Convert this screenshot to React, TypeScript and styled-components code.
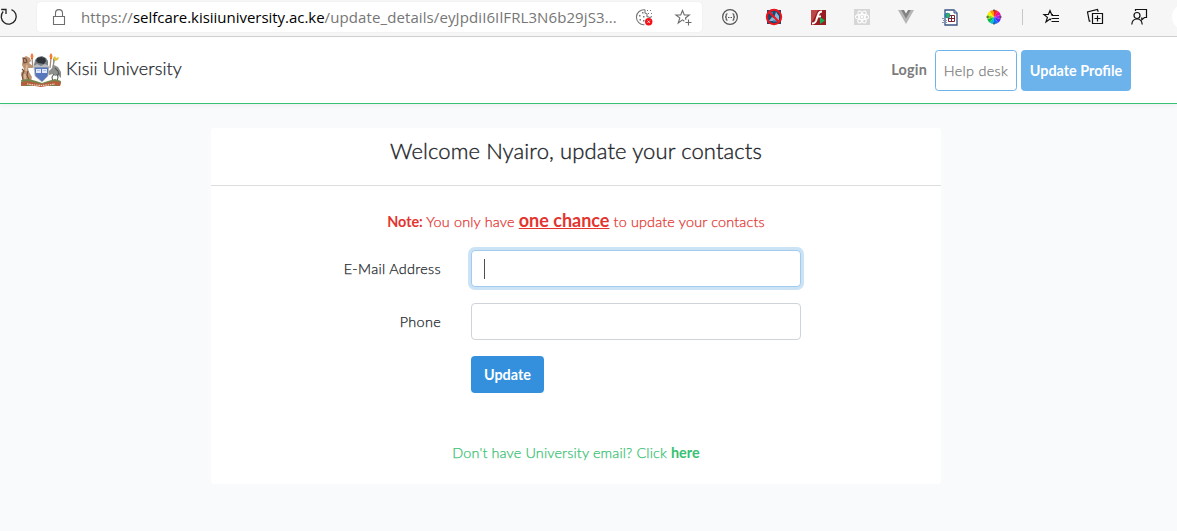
import * as React from 'react';
import styled, { createGlobalStyle } from 'styled-components';

const GlobalStyle = createGlobalStyle`
  * {
    box-sizing: border-box;
  }
  body {
    margin: 0;
    background: #f8fafc;
    color: #212529;
    font-family: Lato, "Open Sans", sans-serif;
    font-size: 14.4px;
    font-weight: 300;
    line-height: 23px;
    -webkit-text-stroke-width: 0.25px;
    overflow: hidden;
  }
  b {
    font-weight: 700;
    -webkit-text-stroke-width: 0;
  }
`;

const BrowserBar = styled.div`
  display: flex;
  align-items: flex-start;
  height: 37px;
  background: #f6f6f6;
  border-bottom: 1px solid #cfcfcf;
  overflow: hidden;
`;

const Icon = styled.svg`
  display: block;
  flex: none;
  overflow: visible;
`;

const ReloadSlot = styled.div`
  width: 37px;
  padding-top: 8px;
  flex: none;
`;

const AddressBox = styled.div`
  display: flex;
  align-items: center;
  flex: none;
  width: 665px;
  height: 30px;
  margin: 2px 6px 0 0;
  padding: 0 10px 0 14px;
  background: #fff;
  border-radius: 4px;
  box-shadow: 0 0 2px rgba(0, 0, 0, 0.07);
`;

const Url = styled.div`
  flex: 1;
  margin-left: 14px;
  font-family: "Open Sans", "Noto Sans", sans-serif;
  font-size: 15px;
  font-weight: 400;
  -webkit-text-stroke-width: 0;
  letter-spacing: 0.1px;
  color: #767676;
  white-space: nowrap;
`;

const Host = styled.span`
  color: #000;
  letter-spacing: -0.03px;
`;

const StarSlot = styled.div`
  margin-left: 22px;
`;

const ToolSlot = styled.div`
  display: flex;
  align-items: center;
  justify-content: center;
  flex: none;
  width: 44px;
  height: 34px;
`;

const ToolDivider = styled.div`
  flex: none;
  width: 1px;
  height: 16px;
  margin: 9px 6px 0;
  background: #c8c8c8;
`;

const Avatar = styled.div`
  flex: none;
  width: 26px;
  height: 26px;
  margin: 4px 0 0 11px;
  border-radius: 50%;
  background: #fff;
`;

const Navbar = styled.nav`
  display: flex;
  align-items: center;
  justify-content: space-between;
  height: 67px;
  padding: 0 46px 0 20px;
  background: #fff;
  border-bottom: 1px solid #38c172;
  box-shadow: 0 2px 4px rgba(0, 0, 0, 0.04);
`;

const Brand = styled.div`
  display: flex;
  align-items: center;
  gap: 4px;
  font-size: 18px;
  letter-spacing: 0.12px;
`;

const BrandName = styled.span`
  padding-bottom: 3px;
`;

const NavLinks = styled.div`
  display: flex;
  align-items: center;
  gap: 4px;
  padding-top: 1px;
`;

const NavLink = styled.a`
  margin: -3px 4px 0 0;
  color: #7b7b7b;
  font-weight: 700;
  letter-spacing: 0.2px;
  -webkit-text-stroke-width: 0;
`;

const NavButton = styled.a<{ $filled?: boolean; $width: number }>`
  display: flex;
  align-items: center;
  justify-content: center;
  width: ${({ $width }) => $width}px;
  height: 41px;
  padding-bottom: 1px;
  border: 1px solid #6cb2eb;
  border-radius: 3.5px;
  background: ${({ $filled }) => ($filled ? '#6cb2eb' : '#fff')};
  color: ${({ $filled }) => ($filled ? '#fff' : '#7b7b7b')};
  font-weight: ${({ $filled }) => ($filled ? 700 : 300)};
  letter-spacing: ${({ $filled }) => ($filled ? 0 : 0.3)}px;
  -webkit-text-stroke-width: ${({ $filled }) => ($filled ? 0 : 0.25)}px;
  white-space: nowrap;
`;

const Card = styled.main`
  width: 730px;
  height: 356px;
  margin: 24px 0 0 211px;
  background: #fff;
  border-radius: 3px;
`;

const CardHeader = styled.header`
  height: 58px;
  padding-top: 9px;
  border-bottom: 1px solid #dcdddf;
  text-align: center;
`;

const Title = styled.h1`
  margin: 0;
  font-size: 22px;
  line-height: 28px;
  font-weight: 300;
  letter-spacing: 0.12px;
  -webkit-text-stroke-width: 0.35px;
`;

const Note = styled.p`
  margin: 0;
  padding: 21px 0 15px;
  color: #e3342f;
  text-align: center;
  line-height: 27px;
  letter-spacing: 0.17px;

  b {
    letter-spacing: 0;
  }
`;

const Chance = styled.b`
  font-size: 18px;
  text-decoration: underline;
`;

const FormRow = styled.div`
  display: grid;
  grid-template-columns: 230px 330px;
  column-gap: 30px;
  align-items: center;
  height: 37px;
  margin-bottom: 16px;
`;

const Label = styled.label`
  text-align: right;
  padding-bottom: 1px;
  letter-spacing: 0.32px;
`;

const Field = styled.div`
  position: relative;
  height: 37px;
`;

const Input = styled.input<{ $active?: boolean }>`
  display: block;
  width: 100%;
  height: 37px;
  padding: 6px 12px;
  border: 1px solid ${({ $active }) => ($active ? '#a1cbef' : '#ced4da')};
  border-radius: 4px;
  box-shadow: ${({ $active }) => ($active ? '0 0 0 3px #cce3f6' : 'none')};
  background: #fff;
  font: inherit;
  outline: none;
`;

const Caret = styled.span`
  position: absolute;
  top: 9px;
  left: 13px;
  width: 1px;
  height: 20px;
  background: #495057;
`;

const SubmitButton = styled.button`
  grid-column: 2;
  width: 73px;
  height: 37px;
  padding: 0 0 1px;
  border: 0;
  border-radius: 4px;
  background: #3490dc;
  color: #fff;
  font: inherit;
  font-weight: 700;
  -webkit-text-stroke-width: 0;
`;

const Hint = styled.p`
  margin: 0;
  padding-top: 32px;
  color: #38c172;
  text-align: center;
  letter-spacing: 0.14px;

  b {
    letter-spacing: 0;
  }
`;

const CoatOfArms = () => (
  <Icon width="42" height="36" viewBox="0 0 42 36">
    {/* lion */}
    <path d="M3 6l3-2 4 2 1 3-2 2 4 3-1 2-4 0 1 4 3 5-1 4H3l-1-4-1-4 3-4-2-4z" fill="#bd9372" />
    <path d="M3 6l3 1 1 3-3 1zM2 17l2 2-2 4 1 5M8 19l-1 4 2 5" fill="none" stroke="#6d4c3a" strokeWidth="1.1" />
    <path d="M7 13l-1 6M5 22v5" fill="none" stroke="#dfbd9b" strokeWidth="1.6" />
    {/* crane */}
    <path d="M33 6l2 2-1 5 4 2 3 5v6l-3-3-3 1-2-2-4 1-1-3 4-4 1-5z" fill="#8d908c" />
    <path d="M34 22l-2 3 1 5M37 22l1 3-1 5M35 16l3 3 1 4" fill="none" stroke="#585b58" strokeWidth="1.1" />
    <path d="M33 6l2-2 1 2 3-1-1 3-3 1z" fill="#dfc43c" />
    {/* torches */}
    <path d="M12 6l1 10M31 6l-1 10" stroke="#a58a74" strokeWidth="1.3" />
    <path d="M12 1l1.5 3-.8 3h-1.4l-.8-3zM31 1l1.5 3-.8 3h-1.4l-.8-3z" fill="#ed5422" />
    <path d="M12 3v3M31 3v3" stroke="#ffac36" />
    {/* helmet */}
    <path d="M14 13l1-5 3-3 4-1 4 2 2 3v6l-3 2H16z" fill="#7a8083" />
    <path d="M17 6l4-1 4 1 1 3-2 3-6-1-2-2z" fill="#30353a" />
    <path d="M14 14l3-2 4 2 4-2 4 2v2H14z" fill="#b9bdc2" />
    {/* shield */}
    <path d="M14 15h15l-1 9-6 6-7-6z" fill="#5877bd" stroke="#c4c2b6" strokeWidth=".8" />
    <path d="M16 17h5v4h-5zM22 17h5v4h-5z" fill="#e2e9fa" />
    <path d="M17 18.5h3M23 18.5h3" stroke="#899bcc" strokeWidth=".5" />
    {/* ground and ribbon */}
    <path d="M1 28l8-1 7 2 6 2 6-2 7-2 6 2-1 5H2z" fill="#71864b" />
    <path d="M1 30l7-1 13 3 13-3 7 1-1 4-7-1-12 2-12-2-8 1z" fill="#b45e3e" />
    <path d="M7 32l7 1 7 .5 7-.5 7-1" fill="none" stroke="#efd7c2" strokeWidth="1.2" strokeDasharray="1.5 .8" />
  </Icon>
);

const ReloadIcon = () => (
  <Icon width="18" height="18" viewBox="0 0 18 18" fill="none" stroke="#222" strokeWidth="1.3">
    <path d="M11.5 1.6A7.5 7.5 0 1 1 3.2 3.5M1.2 1.5H6v4.6" />
  </Icon>
);

const LockIcon = () => (
  <Icon width="16" height="17" viewBox="0 0 16 17" fill="none" stroke="#6e6e6e" strokeWidth="1.1">
    <path d="M2.5 7.5h11v8h-11zM4.5 7.5V4.1a3.5 3.5 0 0 1 7 0v3.4" />
  </Icon>
);

const CookieIcon = () => (
  <Icon width="17" height="17" viewBox="0 0 17 17" fill="none" stroke="#777" strokeWidth="1.1">
    <path d="M9 .8a7.5 7.5 0 1 0-.5 14.9M9 .8V4l2 1v2.5l3 1 2-1" />
    <g fill="#777" stroke="none">
      <path d="M6 3h1.5v1.5H6zM3 6h1.5v1.5H3zM7 7h1.5v1.5H7zM3.5 10H5v1.5H3.5zM7 11h1.5v1.5H7zM11 1h1v1h-1zM14 1h1v1h-1zM12 4h1v1h-1zM15 4h1v1h-1z" />
    </g>
    <circle cx="12.7" cy="12.7" r="3.7" fill="#f50f16" stroke="none" />
    <path d="M11.5 11.5l2.4 2.4m0-2.4l-2.4 2.4" stroke="#fff" strokeWidth=".8" />
  </Icon>
);

const StarAddIcon = () => (
  <Icon width="17" height="17" viewBox="0 0 17 17" fill="none" stroke="#6b6b6b" strokeWidth="1.1">
    <path d="M9.4 12.2L7.5 10.9 3.2 14l1.6-5.1L.9 6h4.8l1.8-4.5L9.3 6h5L10.5 9l.5 1.8M13.5 10.5v6M10.5 13.5h6" />
  </Icon>
);

const BracesIcon = () => (
  <Icon width="18" height="18" viewBox="0 0 18 18" fill="none" stroke="#555" strokeWidth="1.2">
    <circle cx="9" cy="9" r="7.4" />
    <path d="M6.5 5.8q-1.5 0-1.3 1.7Q5.3 9 4 9q1.3 0 1.2 1.5-.2 1.7 1.3 1.7M11.5 5.8q1.5 0 1.3 1.7Q12.7 9 14 9q-1.3 0-1.2 1.5.2 1.7-1.3 1.7" />
    <path d="M7 9.5h4" strokeDasharray="1 .5" />
  </Icon>
);

const BlockedIcon = () => (
  <Icon width="18" height="18" viewBox="0 0 18 18">
    <path d="M2 2h14v14H2z" fill="#20476c" />
    <path d="M4 13l3-4 2 1 2-6 3 4v5z" fill="#8cb8d9" />
    <path d="M4 5h4M8 13h5" stroke="#3e83b7" strokeWidth="1.5" />
    <g fill="none" stroke="#ed141b" strokeWidth="2">
      <circle cx="9" cy="9" r="7.2" />
      <path d="M4 4l10 10" />
    </g>
  </Icon>
);

const FlashIcon = () => (
  <Icon width="17" height="17" viewBox="0 0 17 17">
    <path d="M1 1h15v15H1z" fill="#981c20" />
    <path d="M1 1h7L3 11l-2 3z" fill="#bd4747" />
    <path d="M12 2.5q-3 0-4 3.5L6 12q-1 2.5-4 2.5M7.5 7.5H11" fill="none" stroke="#fff" strokeWidth="2" />
    <path d="M10 8l5 3.5-5 3.5z" fill="#14ad52" />
  </Icon>
);

const ReactIcon = () => (
  <Icon width="16" height="16" viewBox="0 0 16 16">
    <path d="M0 0h16v16H0z" fill="#d6d6d6" />
    <g fill="none" stroke="#fff" strokeWidth="1.1">
      <ellipse cx="8" cy="8" rx="6.6" ry="2.6" />
      <ellipse cx="8" cy="8" rx="6.6" ry="2.6" transform="rotate(60 8 8)" />
      <ellipse cx="8" cy="8" rx="6.6" ry="2.6" transform="rotate(120 8 8)" />
    </g>
    <circle cx="8" cy="8" r="1.4" fill="#fff" />
  </Icon>
);

const VueIcon = () => (
  <Icon width="16" height="16" viewBox="0 0 16 16">
    <path d="M0 1h16L8 15z" fill="#b5b5b5" />
    <path d="M3.2 1h9.6L8 9.5z" fill="#828282" />
    <path d="M6 1h4L8 4.5z" fill="#f6f6f6" />
  </Icon>
);

const PageIcon = () => (
  <Icon width="17" height="17" viewBox="0 0 17 17">
    <path d="M3 1h9l3 3v12H3z" fill="#fff" stroke="#395482" strokeWidth="1.3" />
    <path d="M12 1v3h3" fill="#b8cce6" stroke="#395482" />
    <path d="M6.5 6.5h6v6h-6zM9.5 6.5v6M6.5 9.5h6" fill="none" stroke="#7d2334" />
    <circle cx="5.5" cy="6.5" r="2.8" fill="#217ac3" />
    <path d="M4 6l2-2 2 1-1 2 1 1-3 1z" fill="#38b54a" />
    <path d="M0 9.5h4M1 11.5h4M0 13.5h5" stroke="#8397b4" strokeWidth="1" />
  </Icon>
);

const wheelColors = ['#ff2424', '#ed128d', '#b61de5', '#4632ef', '#176aff', '#00bddb', '#0aba48', '#85da14', '#faee00', '#ff9b00'];

const ColorWheelIcon = () => (
  <Icon width="16" height="16" viewBox="0 0 16 16">
    {wheelColors.map((color, i) => (
      <path key={color} d="M8 8L8 1A7 7 0 0 1 12.1 2.3z" fill={color} transform={`rotate(${i * 36} 8 8)`} />
    ))}
    <path d="M8 .5v2M8 13.5v2M.5 8h2M13.5 8h2" stroke="#4c4c4c" strokeWidth="1.5" />
  </Icon>
);

const FavoritesIcon = () => (
  <Icon width="17" height="17" viewBox="0 0 17 17" fill="none" stroke="#111" strokeWidth="1.2">
    <path d="M8 11l-1-1-4 3 1.4-4.6L1 5.5h4.4L7 1.5l1.6 4H10M8.5 6.5H16M8.5 9.5H16M8.5 12.5H16" />
  </Icon>
);

const CollectionsIcon = () => (
  <Icon width="18" height="18" viewBox="0 0 18 18" fill="none" stroke="#111" strokeWidth="1.2">
    <path d="M6.5 5.5h10v10h-10zM11.5 7.5v6M8.5 10.5h6M4.5 13.2H3.3L1.5 4l10-2.5.7 2.2" />
  </Icon>
);

const FeedbackIcon = () => (
  <Icon width="18" height="18" viewBox="0 0 18 18" fill="none" stroke="#111" strokeWidth="1.2">
    <path d="M5.5 3V1.5h11v8h-2l-2.7 2.2V9.5" />
    <circle cx="7" cy="7.5" r="3" />
    <path d="M1.8 16.5c.2-3.5 2.2-5.5 5.2-5.5s5 2 5.2 5.5" />
  </Icon>
);

const extensionIcons = [BracesIcon, BlockedIcon, FlashIcon, ReactIcon, VueIcon, PageIcon, ColorWheelIcon];
const browserIcons = [FavoritesIcon, CollectionsIcon, FeedbackIcon];

const BrowserToolbar = () => (
  <BrowserBar>
    <ReloadSlot>
      <ReloadIcon />
    </ReloadSlot>
    <AddressBox>
      <LockIcon />
      <Url>
        https://<Host>selfcare.kisiiuniversity.ac.ke</Host>/update_details/eyJpdiI6IlFRL3N6b29jS3...
      </Url>
      <CookieIcon />
      <StarSlot>
        <StarAddIcon />
      </StarSlot>
    </AddressBox>
    {extensionIcons.map((Glyph, i) => (
      <ToolSlot key={i}><Glyph /></ToolSlot>
    ))}
    <ToolDivider />
    {browserIcons.map((Glyph, i) => (
      <ToolSlot key={i}><Glyph /></ToolSlot>
    ))}
    <Avatar />
  </BrowserBar>
);

const ContactForm = () => (
  <Card>
    <CardHeader>
      <Title>Welcome Nyairo, update your contacts</Title>
    </CardHeader>
    <Note>
      <b>Note:</b> You only have <Chance>one chance</Chance> to update your contacts
    </Note>
    <FormRow>
      <Label htmlFor="email">E-Mail Address</Label>
      <Field>
        <Input id="email" type="email" $active />
        <Caret />
      </Field>
    </FormRow>
    <FormRow>
      <Label htmlFor="phone">Phone</Label>
      <Input id="phone" type="text" />
    </FormRow>
    <FormRow>
      <SubmitButton type="button">Update</SubmitButton>
    </FormRow>
    <Hint>
      Don't have University email? Click <b>here</b>
    </Hint>
  </Card>
);

export default function App() {
  return (
    <>
      <GlobalStyle />
      <BrowserToolbar />
      <Navbar>
        <Brand>
          <CoatOfArms />
          <BrandName>Kisii University</BrandName>
        </Brand>
        <NavLinks>
          <NavLink>Login</NavLink>
          <NavButton $width={82}>Help desk</NavButton>
          <NavButton $filled $width={110}>Update Profile</NavButton>
        </NavLinks>
      </Navbar>
      <ContactForm />
    </>
  );
}
